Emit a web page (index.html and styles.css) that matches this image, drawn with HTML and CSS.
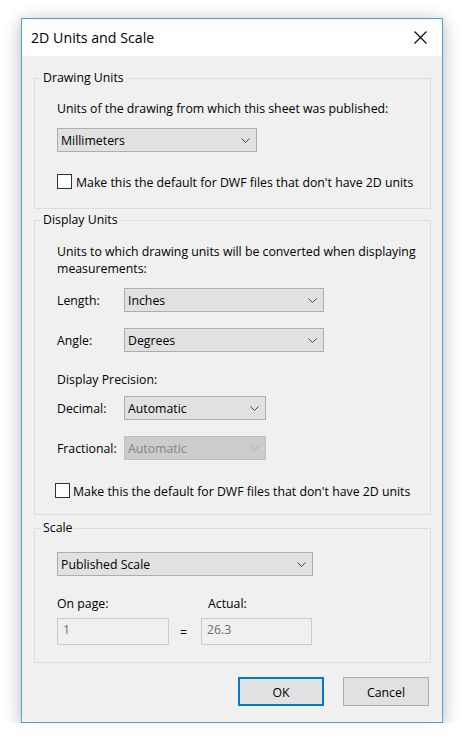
FILE: index.html
```html
<!DOCTYPE html>
<html>
<head>
<meta charset="utf-8">
<link rel="stylesheet" href="styles.css">
</head>
<body>
<div class="window">
  <div class="titlebar">
    <span class="title">2D Units and Scale</span>
    <svg class="close" width="13" height="13" viewBox="0 0 13 13"><path d="M0.5 0.5L12.5 12.5M12.5 0.5L0.5 12.5" stroke="#000" stroke-width="1.1" fill="none"/></svg>
  </div>
  <div class="content">
    <fieldset class="group group-drawing">
      <legend>Drawing Units</legend>
      <div class="group-body body-drawing">
        <p class="desc">Units of the drawing from which this sheet was published:</p>
        <div class="select select-units"><span>Millimeters</span><svg class="chev" width="9" height="5" viewBox="0 0 9 5"><path d="M0.5 0.5L4.5 4.5L8.5 0.5" stroke="#444" fill="none"/></svg></div>
        <div class="check check-drawing"><span class="box"></span><span class="check-text">Make this the default for DWF files that don't have 2D units</span></div>
      </div>
    </fieldset>

    <fieldset class="group group-display">
      <legend>Display Units</legend>
      <div class="group-body body-display">
        <p class="desc desc-two">Units to which drawing units will be converted when displaying<br>measurements:</p>
        <div class="row row-length"><span class="lbl">Length:</span><div class="select select-wide"><span>Inches</span><svg class="chev" width="9" height="5" viewBox="0 0 9 5"><path d="M0.5 0.5L4.5 4.5L8.5 0.5" stroke="#444" fill="none"/></svg></div></div>
        <div class="row row-angle"><span class="lbl">Angle:</span><div class="select select-wide"><span>Degrees</span><svg class="chev" width="9" height="5" viewBox="0 0 9 5"><path d="M0.5 0.5L4.5 4.5L8.5 0.5" stroke="#444" fill="none"/></svg></div></div>
        <p class="desc precision">Display Precision:</p>
        <div class="row row-decimal"><span class="lbl">Decimal:</span><div class="select select-narrow"><span>Automatic</span><svg class="chev" width="9" height="5" viewBox="0 0 9 5"><path d="M0.5 0.5L4.5 4.5L8.5 0.5" stroke="#444" fill="none"/></svg></div></div>
        <div class="row row-fraction"><span class="lbl">Fractional:</span><div class="select select-narrow disabled"><span>Automatic</span><svg class="chev" width="9" height="5" viewBox="0 0 9 5"><path d="M0.5 0.5L4.5 4.5L8.5 0.5" stroke="#a8a8a8" fill="none"/></svg></div></div>
        <div class="check check-display"><span class="box"></span><span class="check-text">Make this the default for DWF files that don't have 2D units</span></div>
      </div>
    </fieldset>

    <fieldset class="group group-scale">
      <legend>Scale</legend>
      <div class="group-body body-scale">
        <div class="select select-scale"><span>Published Scale</span><svg class="chev" width="9" height="5" viewBox="0 0 9 5"><path d="M0.5 0.5L4.5 4.5L8.5 0.5" stroke="#444" fill="none"/></svg></div>
        <div class="ratio">
          <span class="ratio-label">On page:</span>
          <span></span>
          <span class="ratio-label actual">Actual:</span>
          <div class="textbox">1</div>
          <span class="eq">=</span>
          <div class="textbox">26.3</div>
        </div>
      </div>
    </fieldset>

    <div class="buttons">
      <div class="btn btn-default">OK</div>
      <div class="btn">Cancel</div>
    </div>
  </div>
</div>
</body>
</html>
```

FILE: styles.css
```css
html, body {
  margin: 0;
  padding: 0;
  background: #ffffff;
}
body {
  font-family: "Open Sans", "Noto Sans", sans-serif;
  font-size: 12.3px;
  color: #000;
}
.window {
  margin: 18px 0 0 21px;
  width: 420px;
  height: 703px;
  border: 1px solid #4aa2d6;
  background: #f0f0f0;
  box-shadow: 0 3px 16px rgba(0, 0, 0, 0.3);
  display: flex;
  flex-direction: column;
}
.titlebar {
  height: 37px;
  background: #fff;
  display: flex;
  align-items: center;
  justify-content: space-between;
  padding: 0 15px 0 9px;
  flex: none;
}
.title {
  font-size: 14.2px;
  line-height: 20px;
  padding-top: 1px;
}
.close {
  display: block;
}
.content {
  flex: 1;
  padding: 14px 11px 0 12px;
}
.group {
  margin: 0;
  padding: 0;
  border: 1px solid #dcdcdc;
  min-width: 0;
}
.group legend {
  margin-left: 6px;
  padding: 0 2px;
  line-height: 16px;
}
.group-body {
  padding-left: 22px;
}
.desc {
  margin: 0;
  line-height: 16px;
  padding-top: 1px;
}
.desc-two {
  line-height: 17px;
}
.select {
  box-sizing: border-box;
  height: 24px;
  border: 1px solid #adadad;
  background: #e1e1e1;
  display: flex;
  align-items: center;
  justify-content: space-between;
  padding: 2px 6px 0 3px;
  line-height: 16px;
}
.select .chev {
  margin-top: -2px;
}
.select.disabled {
  background: #cccccc;
  border-color: #bfbfbf;
  color: #838383;
}
.chev {
  display: block;
}
.select-units { width: 200px; margin-top: 11px; }
.select-wide { width: 200px; }
.select-narrow { width: 142px; }
.select-scale { width: 256px; }

.check {
  display: flex;
  align-items: center;
  height: 15px;
  line-height: 16px;
  gap: 4px;
}
.check-text {
  padding-top: 2px;
}
.box {
  box-sizing: border-box;
  width: 15px;
  height: 15px;
  border: 1px solid #333;
  background: #fff;
  flex: none;
}
.body-drawing { padding-top: 14px; padding-bottom: 19px; }
.check-drawing { margin-top: 22px; }

.group-display { margin-top: 3px; }
.body-display { padding-top: 14px; padding-bottom: 16px; }
.row {
  display: flex;
  align-items: center;
}
.lbl {
  width: 67px;
  line-height: 16px;
  padding-top: 2px;
}
.row-length { margin-top: 11px; }
.row-angle { margin-top: 16px; }
.precision { margin-top: 19px; }
.row-decimal { margin-top: 8px; }
.row-fraction { margin-top: 16px; }
.check-display { margin-top: 23px; margin-left: -2px; gap: 3px; }

.group-scale { margin-top: 5px; }
.body-scale { padding-top: 16px; padding-bottom: 17px; }
.ratio {
  margin-top: 19px;
  display: grid;
  grid-template-columns: 112px 32px 111px;
  grid-template-rows: 16px 27px;
  row-gap: 7px;
  align-items: center;
}
.ratio-label { line-height: 16px; padding-top: 1px; }
.actual { padding-left: 7px; }
.textbox {
  box-sizing: border-box;
  height: 27px;
  border: 1px solid #cccccc;
  background: #f0f0f0;
  color: #6d6d6d;
  padding: 3px 5px 0;
  line-height: 16px;
  align-self: stretch;
}
.eq {
  text-align: left;
  padding-left: 11px;
  line-height: 16px;
  padding-top: 2px;
}

.buttons {
  margin-top: 14px;
  display: flex;
  justify-content: flex-end;
  gap: 19px;
  padding-right: 2px;
}
.btn {
  box-sizing: border-box;
  width: 86px;
  height: 29px;
  border: 1px solid #adadad;
  background: #e1e1e1;
  display: flex;
  align-items: center;
  justify-content: center;
  line-height: 16px;
  padding-top: 2px;
}
.btn-default {
  border: 2px solid #0078d7;
}
```
